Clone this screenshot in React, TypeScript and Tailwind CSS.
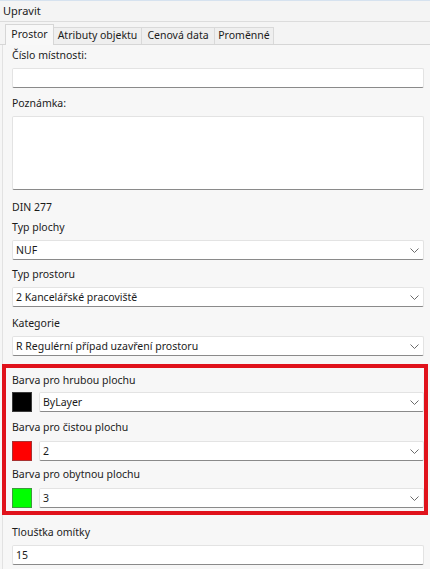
import React from "react";

type Swatch = { fill: string; edge: string };

type ColorRow = {
  label: string;
  value: string;
  swatch: Swatch;
  pad: string;
};

const colorRows: ColorRow[] = [
  { label: "Barva pro hrubou plochu", value: "ByLayer", swatch: { fill: "#000000", edge: "#3a3a3a" }, pad: "pt-[4px] pb-[4px]" },
  { label: "Barva pro čistou plochu", value: "2", swatch: { fill: "#ff0000", edge: "#a83232" }, pad: "pt-[7px] pb-[6px]" },
  { label: "Barva pro obytnou plochu", value: "3", swatch: { fill: "#00ff00", edge: "#3c9a3c" }, pad: "pt-[5px] pb-[6px]" },
];

const tabs = [
  { name: "Prostor", w: "w-[49px]" },
  { name: "Atributy objektu", w: "w-[88px]" },
  { name: "Cenová data", w: "w-[73px]" },
  { name: "Proměnné", w: "w-[59px]" },
];

function Label({ text, pad }: { text: string; pad: string }) {
  return <div className={`leading-[16px] text-[#1b1b1b] whitespace-nowrap ${pad}`}>{text}</div>;
}

function Chevron() {
  return (
    <svg width="9" height="5" viewBox="0 0 9 5" className="shrink-0">
      <polyline points="0.5,0.5 4.5,4.5 8.5,0.5" fill="none" stroke="#6b6b6b" strokeWidth="1" />
    </svg>
  );
}

function TextBox({ value = "", tall = false }: { value?: string; tall?: boolean }) {
  return (
    <div
      className={`${tall ? "h-[74px]" : "h-[20px]"} bg-white border border-[#e3e3e3] border-b-[#8a8a8a] rounded-[2px] flex items-center pl-[3px] leading-[16px]`}
    >
      {value}
    </div>
  );
}

function Select({ value, grow = false }: { value: string; grow?: boolean }) {
  return (
    <div
      className={`${grow ? "flex-1" : ""} h-[20px] bg-white border border-[#e3e3e3] border-b-[#8a8a8a] rounded-[2px] flex items-center justify-between pl-[3px] pr-[4px] leading-[16px]`}
    >
      <span className="whitespace-nowrap">{value}</span>
      <Chevron />
    </div>
  );
}

export default function App() {
  return (
    <div
      className="w-[430px] h-[569px] overflow-hidden bg-[#f6f6f6] text-[10.5px] text-[#1b1b1b]"
      style={{ fontFamily: '"Segoe UI", "Noto Sans", sans-serif' }}
    >
      {/* window caption */}
      <div className="h-[22px] border-t border-[#d6e2ef] border-b border-b-[#dcdcdc] bg-[#f4f4f4] flex items-center pl-[3px] text-[11px]">
        Upravit
      </div>

      {/* tab strip */}
      <div className="h-[23px] flex items-end pl-[5px] border-b border-[#d6d6d6] bg-[#f4f4f4]">
        {tabs.map((t, i) =>
          i === 0 ? (
            <div
              key={t.name}
              className={`${t.w} h-[21px] -mb-px relative bg-[#f8f8f8] border border-[#d6d6d6] border-b-0 flex items-center justify-center whitespace-nowrap`}
            >
              {t.name}
            </div>
          ) : (
            <div
              key={t.name}
              className={`${t.w} h-[17px] bg-[#efefef] border border-[#d9d9d9] border-b-0 border-l-0 flex items-center justify-center whitespace-nowrap`}
            >
              {t.name}
            </div>
          )
        )}
      </div>

      {/* Prostor page */}
      <div className="ml-[2px] border-l border-[#e2e2e2] h-full pl-[9px] pr-[6px] bg-[#f7f7f7]">
        <Label text="Číslo místnosti:" pad="pt-[2px] pb-[5px]" />
        <TextBox />
        <Label text="Poznámka:" pad="pt-[7px] pb-[5px]" />
        <TextBox tall />
        <Label text="DIN 277" pad="pt-[9px]" />
        <Label text="Typ plochy" pad="pt-[4px] pb-[5px]" />
        <Select value="NUF" />
        <Label text="Typ prostoru" pad="pt-[6px] pb-[5px]" />
        <Select value="2 Kancelářské pracoviště" />
        <Label text="Kategorie" pad="pt-[8px] pb-[5px]" />
        <Select value="R Regulérní případ uzavření prostoru" />

        {/* colour group, outlined in red */}
        <div className="mt-[8px] -ml-[10px] -mr-[4px] border-4 border-[#e0121b] pl-[6px] pr-0 pb-[3px]">
          {colorRows.map((r) => (
            <div key={r.label}>
              <Label text={r.label} pad={r.pad} />
              <div className="flex items-center gap-[7px]">
                <div
                  className="w-[20px] h-[20px] border"
                  style={{ backgroundColor: r.swatch.fill, borderColor: r.swatch.edge }}
                />
                <Select value={r.value} grow />
              </div>
            </div>
          ))}
        </div>

        <Label text="Tloušťka omítky" pad="pt-[9px] pb-[5px]" />
        <TextBox value="15" />
      </div>
    </div>
  );
}
